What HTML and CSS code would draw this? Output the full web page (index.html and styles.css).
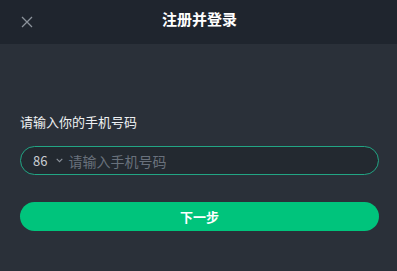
FILE: index.html
```html
<!DOCTYPE html>
<html lang="zh-CN">
<head>
<meta charset="utf-8">
<title>注册并登录</title>
<link rel="stylesheet" href="styles.css">
</head>
<body>
<div class="page">
  <header class="topbar">
    <button class="close" aria-label="关闭">
      <svg width="12" height="12" viewBox="0 0 12 12"><path d="M1 1L11 11M11 1L1 11" stroke="#8b929b" stroke-width="1.3" fill="none"/></svg>
    </button>
    <h1 class="title">注册并登录</h1>
    <span class="spacer"></span>
  </header>
  <main class="content">
    <label class="label">请输入你的手机号码</label>
    <div class="field">
      <span class="code">86</span>
      <svg class="chev" width="7" height="5" viewBox="0 0 7 5"><path d="M0.7 0.9L3.5 3.7L6.3 0.9" stroke="#8c939c" stroke-width="1.1" fill="none"/></svg>
      <input class="phone" type="text" placeholder="请输入手机号码">
    </div>
    <button class="next">下一步</button>
  </main>
</div>
</body>
</html>
```

FILE: styles.css
```css
html, body {
  margin: 0;
  padding: 0;
  background: #2a3039;
  font-family: "Noto Sans CJK SC", "Noto Sans", sans-serif;
}
.page {
  width: 397px;
  height: 271px;
  background: #2a3039;
}
.topbar {
  height: 44px;
  background: #1f252e;
  display: grid;
  grid-template-columns: 60px 1fr 60px;
  align-items: center;
}
.close {
  background: none;
  border: 0;
  padding: 0 0 0 21px;
  margin: 0;
  display: flex;
  align-items: center;
  height: 44px;
  cursor: pointer;
}
.title {
  margin: 0;
  text-align: center;
  color: #ffffff;
  font-size: 15px;
  font-weight: 700;
  line-height: 20px;
  padding-bottom: 7px;
  padding-left: 2px;
}
.content {
  padding: 69px 18px 0 20px;
  display: flex;
  flex-direction: column;
}
.label {
  color: #eef0f2;
  font-size: 13px;
  line-height: 18px;
  height: 18px;
}
.field {
  margin-top: 15px;
  height: 27px;
  border: 1px solid #22a584;
  border-radius: 15px;
  background: #232930;
  display: flex;
  align-items: center;
  padding-left: 12px;
}
.code {
  color: #c9cdd2;
  font-size: 13px;
  line-height: 18px;
}
.chev {
  margin-left: 9px;
}
.phone {
  margin-left: 5px;
  flex: 1;
  background: transparent;
  border: 0;
  outline: none;
  color: #c9cdd2;
  font-family: "Noto Sans CJK SC", "Noto Sans", sans-serif;
  font-size: 14px;
  padding: 0;
  height: 20px;
}
.phone::placeholder {
  color: #69717c;
}
.next {
  margin-top: 27px;
  height: 29px;
  border: 0;
  border-radius: 15px;
  background: #00c47c;
  color: #ffffff;
  font-family: "Noto Sans CJK SC", "Noto Sans", sans-serif;
  font-size: 13px;
  font-weight: 700;
  padding: 0 0 1px 0;
  cursor: pointer;
}
```
